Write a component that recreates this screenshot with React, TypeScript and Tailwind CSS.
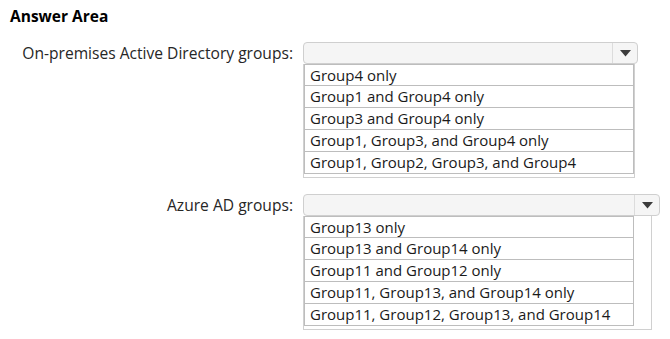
import React from 'react';

type DropProps = {
  label: string;
  selectW: string;
  listW: string;
  rowW: string;
  options: string[];
};

const Arrow: React.FC = () => (
  <svg width="11" height="7" viewBox="0 0 11 7">
    <path d="M0 0 L11 0 L5.5 6.5 Z" fill="#3c3c3c" />
  </svg>
);

const Dropdown: React.FC<DropProps> = ({ label, selectW, listW, rowW, options }) => {
  return (
    <div className="flex">
      <div className="w-[303px] pr-[10px] text-right text-[15.6px] leading-[22px] text-[#262626] whitespace-nowrap">{label}</div>
      <div className="flex flex-col">
        <div className={`${selectW} h-[22px] flex rounded-[4px] border border-[#cfcfcf] bg-[#f5f5f5]`}>
          <div className="flex-1" />
          <div className="w-[25px] border-l border-[#dcdcdc] flex items-center justify-center">
            <Arrow />
          </div>
        </div>
        <div className={`${listW} border-x border-b border-[#d0d0d0] pb-[3px] bg-white`}>
          {options.map((o, i) => (
            <div
              key={o}
              className={`${rowW} h-[22px] border-x border-b border-[#bdbdbd] ${i === 0 ? 'border-t' : ''} pl-[5px] text-[15px] leading-[20px] text-[#1a1a1a] whitespace-nowrap`}
            >
              {o}
            </div>
          ))}
        </div>
      </div>
    </div>
  );
};

const App: React.FC = () => {
  return (
    <div className="w-[670px] h-[339px] bg-white font-['Segoe_UI','Open_Sans',sans-serif] overflow-hidden">
      <div className="pl-[10px] pt-[7px] text-[15.5px] leading-[18px] font-bold text-black">Answer Area</div>
      <div className="pt-[17px] flex flex-col gap-[16px]">
        <Dropdown
          label="On-premises Active Directory groups:"
          selectW="w-[335px]"
          listW="w-[332px]"
          rowW="w-[330px]"
          options={[
            'Group4 only',
            'Group1 and Group4 only',
            'Group3 and Group4 only',
            'Group1, Group3, and Group4 only',
            'Group1, Group2, Group3, and Group4',
          ]}
        />
        <Dropdown
          label="Azure AD groups:"
          selectW="w-[357px]"
          listW="w-[349px]"
          rowW="w-[330px]"
          options={[
            'Group13 only',
            'Group13 and Group14 only',
            'Group11 and Group12 only',
            'Group11, Group13, and Group14 only',
            'Group11, Group12, Group13, and Group14',
          ]}
        />
      </div>
    </div>
  );
};

export default App;
